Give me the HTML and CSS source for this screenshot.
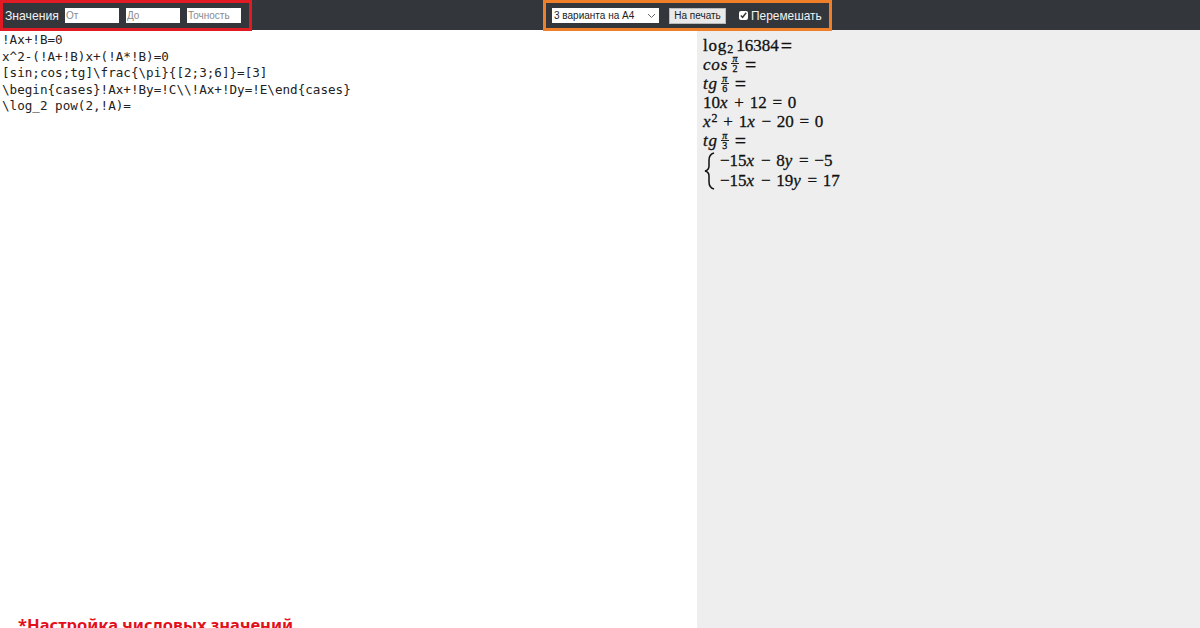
FILE: index.html
```html
<!DOCTYPE html>
<html lang="ru">
<head>
<meta charset="utf-8">
<title>Значения</title>
<link rel="stylesheet" href="styles.css">
</head>
<body>
<header class="bar">
  <div class="box box-red">
    <span class="label">Значения</span>
    <input class="field" placeholder="От">
    <input class="field" placeholder="До">
    <input class="field" placeholder="Точность">
  </div>
  <div class="box box-orange">
    <select class="variants"><option>3 варианта на А4</option></select>
    <button class="print">На печать</button>
    <label class="shuffle"><input class="check" type="checkbox" checked>Перемешать</label>
  </div>
</header>
<main class="main">
  <section class="editor">
    <div class="code">
      <div>!Ax+!B=0</div>
      <div>x^2-(!A+!B)x+(!A*!B)=0</div>
      <div>[sin;cos;tg]\frac{\pi}{[2;3;6]}=[3]</div>
      <div>\begin{cases}!Ax+!By=!C\\!Ax+!Dy=!E\end{cases}</div>
      <div>\log_2 pow(2,!A)=</div>
    </div>
    <p class="note">*Настройка числовых значений</p>
  </section>
  <aside class="preview">
    <div class="line h18"><span class="fn">log</span><sub class="sub">2</sub><span class="sp"></span>16384<span class="op">=</span></div>
    <div class="line h19"><i class="fn">cos</i><span class="frac"><i class="num">π</i><span class="den">2</span></span><span class="op">=</span></div>
    <div class="line h20"><i class="fn">tg</i><span class="frac"><i class="num">π</i><span class="den">6</span></span><span class="op">=</span></div>
    <div class="line h18">10<i class="v">x</i> + 12 = 0</div>
    <div class="line h19"><i class="v">x</i><sup class="sup">2</sup> + 1<i class="v">x</i> − 20 = 0</div>
    <div class="line h20"><i class="fn">tg</i><span class="frac"><i class="num">π</i><span class="den">3</span></span><span class="op">=</span></div>
    <div class="cases">
      <svg class="brace" width="11" height="38" viewBox="0 0 11 38"><path d="M10 1C6.500 2 5 4 5 8V14C5 17 3.500 18.500 1 19C3.500 19.500 5 21 5 24V30C5 34 6.500 36 10 37" fill="none" stroke="#111" stroke-width="1.500"/></svg>
      <div class="rows">
        <div class="row">−15<i class="v">x</i> − 8<i class="v">y</i> = −5</div>
        <div class="row">−15<i class="v">x</i> − 19<i class="v">y</i> = 17</div>
      </div>
    </div>
  </aside>
</main>
</body>
</html>
```
FILE: styles.css
```css
* { box-sizing: border-box; }
html, body { margin: 0; height: 628px; overflow: hidden; background: #fff; }
body { font-family: "Liberation Sans", Arial, sans-serif; }

.bar { height: 30px; background: #33363a; display: flex; align-items: flex-start; }
.box { height: 31px; display: flex; align-items: center; border: 3px solid; color: #f2f2f2; background: #33363a; position: relative; }
.box-red { width: 252px; border-color: #e01b24; padding-left: 2px; }
.box-orange { width: 289px; margin-left: 291px; border-color: #f07f2a; padding-left: 6px; }

.label { font-size: 12.200px; margin-right: 6px; }
.field { width: 54px; height: 15px; margin: 0 7px 0 0; padding: 0 1px; border: 0; background: #fff; font: 10px "Liberation Sans", sans-serif; }
.field::placeholder { color: #8a8a8a; opacity: 1; }

.variants { width: 107px; height: 15px; padding: 0 0 0 2px; margin-right: 10px; border: 0; border-radius: 0; appearance: none; color: #222; font: 10px "Liberation Sans", sans-serif;
  background: #fff url("data:image/svg+xml,%3Csvg xmlns='http://www.w3.org/2000/svg' width='9' height='6'%3E%3Cpath d='M1 1l3.500 3.500L8 1' fill='none' stroke='%23666' stroke-width='1'/%3E%3C/svg%3E") no-repeat right 3px center; }
.print { width: 57px; height: 16px; margin-right: 13px; padding: 0; border: 1px solid #bbb; background: #e9e9e9; color: #222; font: 10px "Liberation Sans", sans-serif; }
.shuffle { display: flex; align-items: center; font-size: 11.900px; }
.check { width: 9px; height: 9px; margin: 0 3px 0 0; accent-color: #fff; }

.main { display: flex; height: 598px; }
.editor { width: 697px; display: flex; flex-direction: column; justify-content: space-between; overflow: hidden; background: #fff; }
.code { padding: 2px 0 0 2px; font: 12.600px/16.500px "DejaVu Sans Mono", monospace; color: #222; white-space: nowrap; }
.note { margin: 0 0 -9px 18px; font: 700 16.500px/24px "Noto Sans", sans-serif; color: #e3101c; }

.preview { flex: 1; background: #eee; padding: 7px 0 0 6px; font: 17px/18px "Liberation Serif", serif; color: #111; -webkit-text-stroke: 0.300px #111; word-spacing: 1.500px; }
.line { display: flex; align-items: center; white-space: pre; }
.h18 { height: 18px; }
.h19 { height: 19px; }
.h20 { height: 20px; }
.fn { letter-spacing: 0.800px; }
.v { letter-spacing: 1px; }
.sub { font-size: 12px; line-height: 1; align-self: flex-end; }
.sup { font-size: 12px; line-height: 1; align-self: flex-start; }
.sp { width: 3px; }
.op { margin-left: 2px; font-size: 20px; }
.frac + .op { margin-left: 6px; }
.frac { display: inline-flex; flex-direction: column; align-items: center; width: 8px; margin-left: 3px; font-size: 10px; line-height: 9px; }
.num { border-bottom: 1px solid #222; width: 100%; text-align: center; line-height: 8px; }
.den { line-height: 10px; }

.cases { display: flex; align-items: center; }
.brace { flex: none; margin-left: 1px; }
.rows { margin-left: 5px; }
.row { height: 20px; line-height: 20px; white-space: pre; }
```
